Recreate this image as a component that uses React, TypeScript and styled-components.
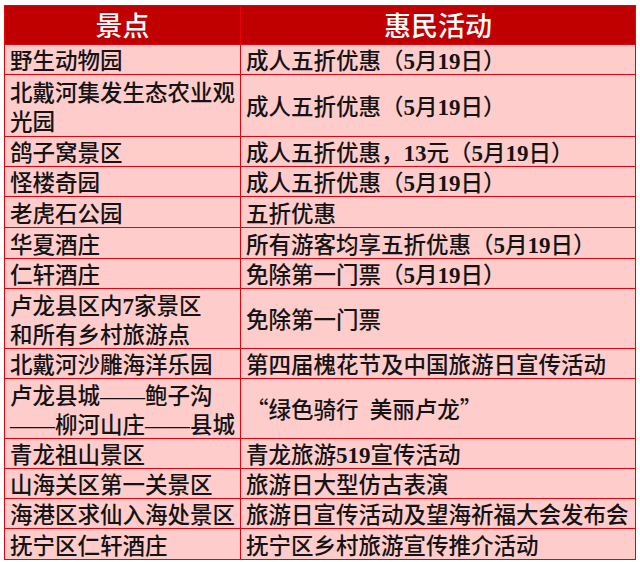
import React, { FC } from "react";
import styled, { createGlobalStyle } from "styled-components";

const GlobalStyle = createGlobalStyle`
  html, body {
    margin: 0;
    padding: 0;
    background: #fff;
  }
`;

const Wrapper = styled.div`
  width: 640px;
  height: 562px;
  padding: 5px 4px 0 4px;
  box-sizing: border-box;
`;

const Table = styled.table`
  width: 632px;
  border-collapse: collapse;
  table-layout: fixed;
  font-family: "Noto Sans CJK SC", sans-serif;
  color: #141414;
`;

const HeadCell = styled.th`
  height: 38px;
  padding: 0;
  background: #c00000;
  border: 1.5px solid #e8000b;
  color: #fff;
  font-size: 27px;
  font-weight: 500;
  line-height: 32px;
  text-align: center;
`;

const Row = styled.tr<{ $h: number }>`
  height: ${p => p.$h}px;
`;

const Cell = styled.td`
  padding: 0 2px 0 5px;
  background: #ffcccc;
  border: 1.5px solid #e8000b;
  font-size: 22.5px;
  font-weight: 500;
  line-height: 29px;
  white-space: pre;
  vertical-align: middle;
  overflow: hidden;
`;

const Line = styled.div`
  height: 29px;
`;

const Num = styled.span`
  font-family: "Liberation Serif", serif;
  font-weight: bold;
  font-size: 23px;
  line-height: 0;
`;

const Dash = styled.span`
  font-family: "Liberation Serif", serif;
  line-height: 0;
`;

interface IEntry {
    place: string[];
    event: string;
    h: number;
}

const entries: IEntry[] = [
    { place: ["野生动物园"], event: "成人五折优惠（5月19日）", h: 28 },
    { place: ["北戴河集发生态农业观", "光园"], event: "成人五折优惠（5月19日）", h: 62 },
    { place: ["鸽子窝景区"], event: "成人五折优惠，13元（5月19日）", h: 30 },
    { place: ["怪楼奇园"], event: "成人五折优惠（5月19日）", h: 29 },
    { place: ["老虎石公园"], event: "五折优惠", h: 31 },
    { place: ["华夏酒庄"], event: "所有游客均享五折优惠（5月19日）", h: 31 },
    { place: ["仁轩酒庄"], event: "免除第一门票（5月19日）", h: 30 },
    { place: ["卢龙县区内7家景区", "和所有乡村旅游点"], event: "免除第一门票", h: 60 },
    { place: ["北戴河沙雕海洋乐园"], event: "第四届槐花节及中国旅游日宣传活动", h: 30 },
    { place: ["卢龙县城——鲍子沟", "——柳河山庄——县城"], event: "“绿色骑行\u2002美丽卢龙”", h: 60 },
    { place: ["青龙祖山景区"], event: "青龙旅游519宣传活动", h: 30 },
    { place: ["山海关区第一关景区"], event: "旅游日大型仿古表演", h: 30 },
    { place: ["海港区求仙入海处景区"], event: "旅游日宣传活动及望海祈福大会发布会", h: 30 },
    { place: ["抚宁区仁轩酒庄"], event: "抚宁区乡村旅游宣传推介活动", h: 31 },
];

// digits and dashes come from a latin face, like the original sheet
const renderText = (text: string) =>
    text.split(/(\d+|—+)/).map((part, i) => {
        if (/^\d+$/.test(part)) return <Num key={i}>{part}</Num>;
        if (/^—+$/.test(part)) return <Dash key={i}>{part}</Dash>;
        return <React.Fragment key={i}>{part}</React.Fragment>;
    });

const App: FC = () => {
    return (
        <Wrapper>
            <GlobalStyle />
            <Table>
                <colgroup>
                    <col style={{ width: 236 }} />
                    <col />
                </colgroup>
                <thead>
                    <tr>
                        <HeadCell>景点</HeadCell>
                        <HeadCell>惠民活动</HeadCell>
                    </tr>
                </thead>
                <tbody>
                    {entries.map((entry, i) => (
                        <Row key={i} $h={entry.h}>
                            <Cell>
                                {entry.place.map((line, j) => (
                                    <Line key={j}>{renderText(line)}</Line>
                                ))}
                            </Cell>
                            <Cell>{renderText(entry.event)}</Cell>
                        </Row>
                    ))}
                </tbody>
            </Table>
        </Wrapper>
    );
}
export default App;
